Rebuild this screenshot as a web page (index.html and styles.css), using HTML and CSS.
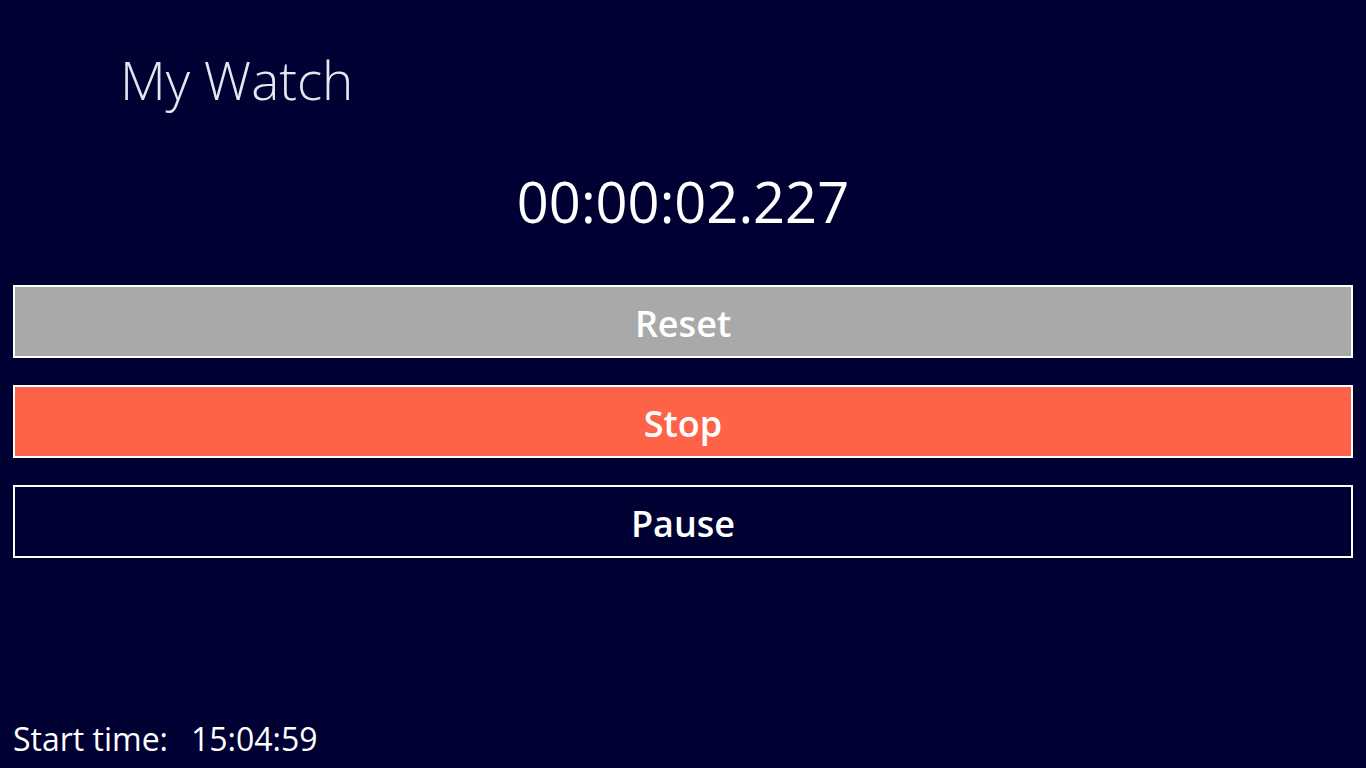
FILE: index.html
```html
<!DOCTYPE html>
<html lang="en">
<head>
<meta charset="utf-8">
<title>My Watch</title>
<link rel="stylesheet" href="styles.css">
</head>
<body>
<div class="page">
  <header class="header">
    <h1 class="title">My Watch</h1>
  </header>
  <div class="timer">00:00:02.227</div>
  <div class="buttons">
    <button class="btn btn-reset" type="button">Reset</button>
    <button class="btn btn-stop" type="button">Stop</button>
    <button class="btn btn-pause" type="button">Pause</button>
  </div>
  <footer class="footer">
    <span class="label">Start time:</span><span class="value">15:04:59</span>
  </footer>
</div>
</body>
</html>
```

FILE: styles.css
```css
html, body {
  margin: 0;
  padding: 0;
  background: #000033;
}
body {
  font-family: "Open Sans", "Noto Sans", sans-serif;
  color: #ffffff;
}
.page {
  width: 1366px;
  height: 768px;
  box-sizing: border-box;
  padding: 0 13px;
  display: flex;
  flex-direction: column;
  overflow: hidden;
}
.header {
  padding-left: 107px;
  padding-top: 44px;
}
.title {
  margin: 0;
  font-size: 53px;
  font-weight: 300;
  line-height: 72px;
  color: #e6e6f0;
}
.timer {
  margin-top: 47px;
  text-align: center;
  font-size: 56px;
  line-height: 76px;
  font-weight: 400;
}
.buttons {
  margin-top: 46px;
  display: flex;
  flex-direction: column;
  gap: 27px;
}
.btn {
  display: block;
  width: 100%;
  height: 73px;
  box-sizing: border-box;
  border: 2px solid #ffffff;
  margin: 0;
  padding: 4px 0 0;
  font-family: "Open Sans", "Noto Sans", sans-serif;
  font-size: 36px;
  font-weight: 600;
  color: #ffffff;
  cursor: pointer;
}
.btn-reset { background: #a9a9a9; }
.btn-stop { background: #ff6347; }
.btn-pause { background: #000033; }
.footer {
  margin-top: auto;
  padding-bottom: 9px;
  font-size: 32px;
  line-height: 40px;
  color: #ffffff;
}
.label { margin-right: 23px; }
```
